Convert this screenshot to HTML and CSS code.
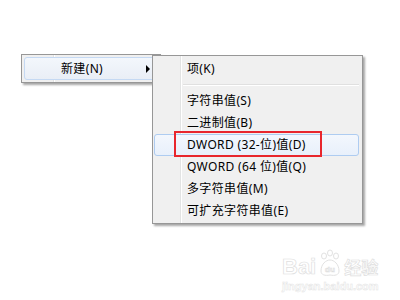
FILE: index.html
```html
<!DOCTYPE html>
<html>
<head>
<meta charset="utf-8">
<link rel="stylesheet" href="styles.css">
</head>
<body>
<div class="stage">
  <div class="menu main">
    <div class="item hot">
      <span class="label">新建(N)</span>
      <span class="arrow"></span>
    </div>
  </div>
  <div class="menu sub">
    <div class="item"><span class="label">项(K)</span></div>
    <div class="sep"></div>
    <div class="item"><span class="label">字符串值(S)</span></div>
    <div class="item"><span class="label">二进制值(B)</span></div>
    <div class="item hot"><span class="label">DWORD (32-位)值(D)</span><span class="mark"></span></div>
    <div class="item"><span class="label">QWORD (64 位)值(Q)</span></div>
    <div class="item"><span class="label">多字符串值(M)</span></div>
    <div class="item"><span class="label">可扩充字符串值(E)</span></div>
  </div>
  <div class="watermark">
    <div class="wm-top">
      <span class="wm-bai">Bai</span>
      <span class="wm-paw">
        <svg width="24" height="28" viewBox="0 0 24 28">
          <g fill="#ffffff" stroke="#e2e2e2" stroke-width="1">
            <ellipse cx="6" cy="7" rx="2.5" ry="3"/>
            <ellipse cx="12" cy="4" rx="2.5" ry="3"/>
            <ellipse cx="18" cy="7" rx="2.5" ry="3"/>
            <path d="M3 22 C3 15 8 11 12 11 C16 11 21 15 21 22 C21 26 17 27 12 26 C7 27 3 26 3 22 Z"/>
          </g>
          <text x="12" y="23" font-size="8" font-weight="bold" text-anchor="middle" fill="#ffffff" stroke="#dcdcdc" stroke-width="0.6" font-family="Liberation Sans, sans-serif">du</text>
        </svg>
      </span>
      <span class="wm-jy">经验</span>
    </div>
    <div class="wm-url">jingyan.baidu.com</div>
  </div>
</div>
</body>
</html>
```
FILE: styles.css
```css
html, body {
  margin: 0;
  padding: 0;
  background: #ffffff;
}
.stage {
  position: relative;
  width: 400px;
  height: 300px;
  padding: 54px 0 0 21px;
  box-sizing: border-box;
  font-family: "Noto Sans", "Noto Sans CJK SC", sans-serif;
  font-size: 12px;
  color: #000;
}
.menu {
  background: #f0f0f0;
  border: 1px solid #979797;
  box-shadow: 2px 2px 2px rgba(0, 0, 0, 0.35);
  box-sizing: border-box;
}
.main {
  width: 140px;
  height: 29px;
  padding: 2px;
  background: linear-gradient(to right, #f0f0f0 31px, #e2e3e3 31px, #e2e3e3 32px, #ffffff 32px, #ffffff 33px, #f0f0f0 33px);
}
.main .item {
  height: 23px;
  display: flex;
  align-items: center;
  padding-left: 36px;
  padding-right: 7px;
}
.main .label { flex: 1; }
.arrow {
  width: 0;
  height: 0;
  border-top: 4px solid transparent;
  border-bottom: 4px solid transparent;
  border-left: 4px solid #000;
}
.sub {
  position: absolute;
  left: 152px;
  top: 55px;
  width: 211px;
  height: 169px;
  padding: 2px 3px 2px 1px;
  background: linear-gradient(to right, #f0f0f0 27px, #e2e3e3 27px, #e2e3e3 28px, #ffffff 28px, #ffffff 29px, #f0f0f0 29px);
}
.item {
  position: relative;
  box-sizing: border-box;
  border: 1px solid transparent;
  border-radius: 3px;
}
.sub .item {
  height: 22px;
  display: flex;
  align-items: center;
  padding-left: 32px;
}
.hot {
  border-color: #aeccf1;
  background: linear-gradient(to bottom, #f3f7fd, #e8f0fb);
}
.main .hot {
  border-color: #c5d9f3;
  background: linear-gradient(to bottom, #f3f7fc, #e9eef6);
}
.sep {
  height: 10px;
  margin-left: 29px;
  background: linear-gradient(to bottom, transparent 4px, #e0e0e0 4px, #e0e0e0 5px, #ffffff 5px, #ffffff 6px, transparent 6px);
}
.label {
  white-space: nowrap;
  line-height: 16px;
  letter-spacing: 0.35px;
}
.mark {
  position: absolute;
  left: 19px;
  top: -4px;
  width: 144px;
  height: 22px;
  border: 2px solid #e8262d;
}
.watermark {
  position: absolute;
  left: 282px;
  top: 244px;
  color: #ffffff;
  font-family: "Liberation Sans", sans-serif;
}
.wm-top {
  display: flex;
  align-items: flex-end;
  gap: 2px;
  height: 34px;
}
.wm-bai {
  font-size: 22px;
  font-weight: bold;
  line-height: 22px;
  -webkit-text-stroke: 0.7px #e0e0e0;
}
.wm-paw {
  display: flex;
  margin-bottom: 1px;
}
.wm-jy {
  font-family: "Noto Sans CJK SC", sans-serif;
  font-size: 17px;
  font-weight: bold;
  line-height: 22px;
  -webkit-text-stroke: 0.7px #e0e0e0;
}
.wm-url {
  font-size: 11px;
  font-weight: bold;
  margin-top: 2px;
  -webkit-text-stroke: 0.5px #e4e4e4;
}
```
